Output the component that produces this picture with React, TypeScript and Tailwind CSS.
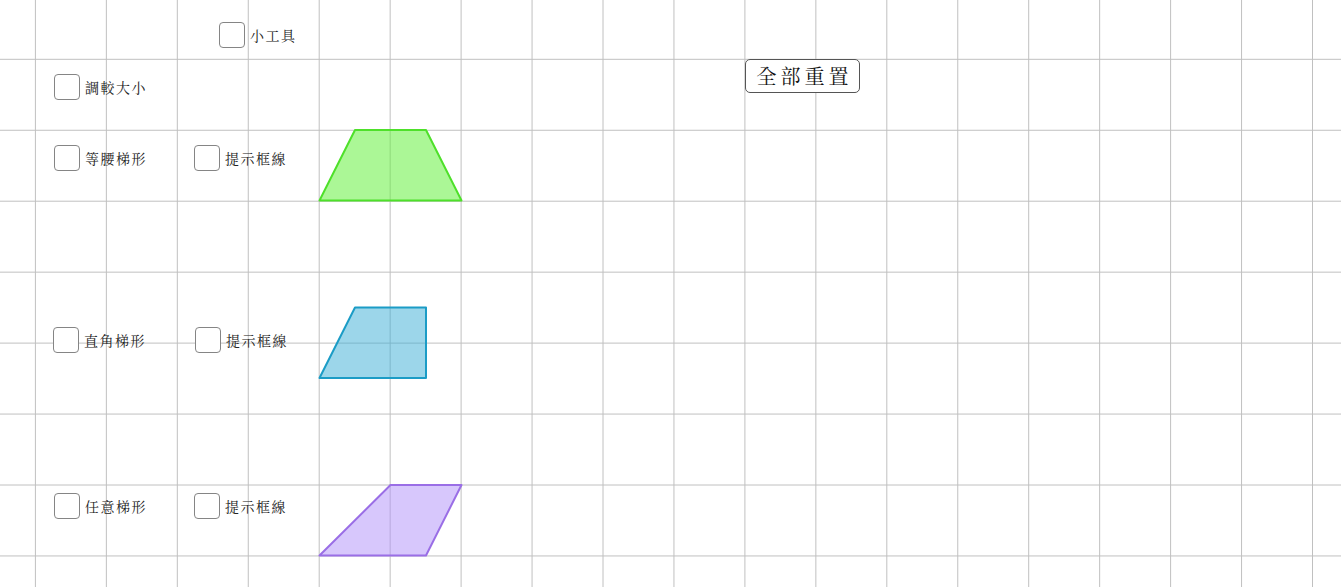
import React from "react";

const font = '"Noto Serif CJK TC", "Noto Sans CJK TC", "Liberation Serif", serif';

function Box({ label }: { label: string }) {
  return (
    <div className="flex items-center">
      <div className="w-[26px] h-[26px] rounded-[4px] border border-[#858585] bg-white" />
      <span
        className="ml-[5px] text-[14px] tracking-[1.5px] text-[#222] leading-none"
        style={{ fontFamily: font }}
      >
        {label}
      </span>
    </div>
  );
}

function ShapeRow({ name }: { name: string }) {
  return (
    <div className="flex items-center">
      <div className="w-[140px]">
        <Box label={name} />
      </div>
      <Box label="提示框線" />
    </div>
  );
}

export default function App() {
  const step = 70.95;
  const vx: number[] = [];
  for (let i = 0; i < 19; i++) vx.push(35.4 + i * step);
  const hy: number[] = [];
  for (let i = 0; i < 8; i++) hy.push(59.3 + i * step);

  return (
    <div className="relative w-full h-[587px] bg-white overflow-hidden">
      <svg className="absolute inset-0" width="1341" height="587">
        {vx.map((x, i) => (
          <line key={"v" + i} x1={x} y1={0} x2={x} y2={587} stroke="#c0c0c0" strokeWidth={1} />
        ))}
        {hy.map((y, i) => (
          <line key={"h" + i} x1={0} y1={y} x2={1341} y2={y} stroke="#c0c0c0" strokeWidth={1} />
        ))}
        <polygon
          points="319.5,200.5 355,130 426,130 461.5,200.5"
          fill="#66f040"
          fillOpacity={0.55}
          stroke="#4ee02a"
          strokeWidth={2}
          strokeLinejoin="round"
        />
        <polygon
          points="319.5,378 355,307.5 426,307.5 426,378"
          fill="#3aaed6"
          fillOpacity={0.5}
          stroke="#1b9cc6"
          strokeWidth={2}
          strokeLinejoin="round"
        />
        <polygon
          points="319.5,555.5 390.5,485 461.5,485 426,555.5"
          fill="#b090fa"
          fillOpacity={0.5}
          stroke="#9a6ee6"
          strokeWidth={2}
          strokeLinejoin="round"
        />
      </svg>

      <div className="relative flex flex-col pt-[22px] pl-[54px]">
        <div className="pl-[165px]">
          <Box label="小工具" />
        </div>
        <div className="mt-[26px]">
          <Box label="調較大小" />
        </div>
        <div className="mt-[45px]">
          <ShapeRow name="等腰梯形" />
        </div>
        <div className="mt-[156px] -ml-px">
          <div className="flex items-center">
            <div className="w-[142px]">
              <Box label="直角梯形" />
            </div>
            <Box label="提示框線" />
          </div>
        </div>
        <div className="mt-[140px]">
          <ShapeRow name="任意梯形" />
        </div>
      </div>

      <button
        className="absolute left-[745px] top-[59px] w-[115px] h-[34px] rounded-[5px] border border-[#555] bg-white flex items-center justify-center text-[20px] tracking-[4px] pl-[4px] text-[#111] leading-none"
        style={{ fontFamily: font }}
      >
        全部重置
      </button>
    </div>
  );
}
